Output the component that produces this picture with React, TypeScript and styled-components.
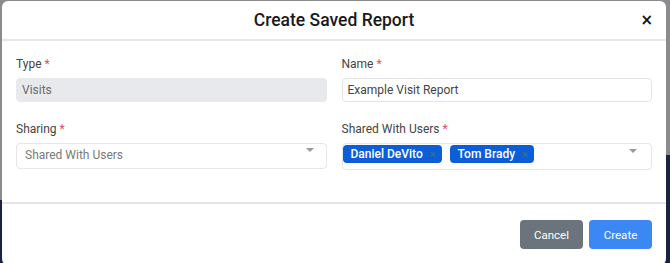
import styled, { createGlobalStyle } from "styled-components";

const GlobalStyle = createGlobalStyle`
  html, body {
    margin: 0;
    height: 263px;
    overflow: hidden;
  }
  body {
    font-family: Roboto, "Liberation Sans", Arial, sans-serif;
  }
`;

type Field = {
  label: string;
  kind: "readonly" | "text" | "select" | "chips";
  value?: string;
  chips?: string[];
};

const fields: Field[] = [
  { label: "Type", kind: "readonly", value: "Visits" },
  { label: "Name", kind: "text", value: "Example Visit Report" },
  { label: "Sharing", kind: "select", value: "Shared With Users" },
  { label: "Shared With Users", kind: "chips", chips: ["Daniel DeVito", "Tom Brady"] },
];

export default function App() {
  return (
    <>
      <GlobalStyle />
      <StyledBackdrop>
        <StyledModal>
          <StyledHeader>
            <StyledTitle>Create Saved Report</StyledTitle>
            <StyledClose aria-label="Close">×</StyledClose>
          </StyledHeader>
          <StyledBody>
            {fields.map((field) => (
              <StyledGroup key={field.label}>
                <StyledLabel>
                  {field.label} <StyledRequired>*</StyledRequired>
                </StyledLabel>
                {field.kind === "readonly" && (
                  <StyledInput $readOnly>{field.value}</StyledInput>
                )}
                {field.kind === "text" && <StyledInput>{field.value}</StyledInput>}
                {field.kind === "select" && (
                  <StyledSelect>
                    <StyledPlaceholder>{field.value}</StyledPlaceholder>
                    <StyledCaret />
                  </StyledSelect>
                )}
                {field.kind === "chips" && (
                  <StyledSelect $multi>
                    <StyledChipList>
                      {field.chips?.map((chip) => (
                        <StyledChip key={chip}>
                          {chip}
                          <StyledChipRemove>×</StyledChipRemove>
                        </StyledChip>
                      ))}
                    </StyledChipList>
                    <StyledCaret />
                  </StyledSelect>
                )}
              </StyledGroup>
            ))}
          </StyledBody>
          <StyledFooter>
            <StyledButton $variant="secondary">Cancel</StyledButton>
            <StyledButton $variant="primary">Create</StyledButton>
          </StyledFooter>
        </StyledModal>
      </StyledBackdrop>
    </>
  );
}

const StyledBackdrop = styled.div`
  height: 263px;
  box-sizing: border-box;
  padding: 1px 0 0 2px;
  background:
    linear-gradient(to bottom, #8b8b8d 200px, #1b2142 200px) left / 50% 100% no-repeat,
    linear-gradient(to bottom, #8b8b8d 155px, #1b2142 155px) right / 50% 100% no-repeat;
`;

const StyledModal = styled.div`
  width: 664px;
  background: #ffffff;
  border-radius: 6px;
  display: flex;
  flex-direction: column;
`;

const StyledHeader = styled.div`
  position: relative;
  height: 38px;
  display: flex;
  align-items: center;
  justify-content: center;
  border-bottom: 2px solid #e6e6e8;
`;

const StyledTitle = styled.h2`
  margin: 0;
  font-size: 17.5px;
  font-weight: 500;
  color: #1a1a1a;
`;

const StyledClose = styled.button`
  position: absolute;
  right: 13px;
  top: 9px;
  border: none;
  background: none;
  padding: 0;
  font-family: "DejaVu Sans", sans-serif;
  font-size: 15px;
  font-weight: 700;
  line-height: 20px;
  color: #111;
`;

const StyledBody = styled.div`
  display: grid;
  grid-template-columns: 1fr 1fr;
  column-gap: 15px;
  row-gap: 19px;
  padding: 15px 14px 32px;
`;

const StyledGroup = styled.div`
  display: flex;
  flex-direction: column;
  gap: 6px;
`;

const StyledLabel = styled.label`
  font-size: 12px;
  line-height: 16px;
  color: #444;
`;

const StyledRequired = styled.span`
  color: #e8466f;
`;

const StyledInput = styled.div<{ $readOnly?: boolean }>`
  height: 24px;
  box-sizing: border-box;
  padding: 0 5px;
  display: flex;
  align-items: center;
  font-size: 12px;
  color: ${({ $readOnly }) => ($readOnly ? "#6b6b6b" : "#444")};
  background: ${({ $readOnly }) => ($readOnly ? "#e8e9ec" : "#ffffff")};
  border: 1px solid ${({ $readOnly }) => ($readOnly ? "#e8e9ec" : "#e4e4e6")};
  border-radius: 4px;
`;

const StyledSelect = styled.div<{ $multi?: boolean }>`
  height: ${({ $multi }) => ($multi ? "27px" : "26px")};
  box-sizing: border-box;
  padding: ${({ $multi }) => ($multi ? "1px 14px 0 0" : "0 12px 0 8px")};
  display: flex;
  align-items: ${({ $multi }) => ($multi ? "flex-start" : "center")};
  justify-content: space-between;
  border: 1px solid #e6e6e8;
  border-radius: 4px;
`;

const StyledPlaceholder = styled.span`
  font-size: 12px;
  color: #7a7a7a;
  margin-top: -3px;
`;

const StyledCaret = styled.span`
  align-self: flex-start;
  margin-top: 4px;
  width: 0;
  height: 0;
  border-left: 4px solid transparent;
  border-right: 4px solid transparent;
  border-top: 4px solid #9a9a9a;
`;

const StyledChipList = styled.div`
  display: flex;
  gap: 8px;
`;

const StyledChip = styled.span`
  height: 18px;
  padding: 0 6px 0 8px;
  display: flex;
  align-items: center;
  gap: 7px;
  background: #0b5ed7;
  color: #ffffff;
  font-size: 12px;
  font-weight: 500;
  border-radius: 4px;
`;

const StyledChipRemove = styled.span`
  font-size: 11px;
  color: #3f7a5e;
  opacity: 0.8;
`;

const StyledFooter = styled.div`
  display: flex;
  justify-content: flex-end;
  gap: 6px;
  padding: 16px 14px;
  border-top: 2px solid #e6e6e8;
`;

const StyledButton = styled.button<{ $variant: "primary" | "secondary" }>`
  width: 63px;
  height: 29px;
  border: none;
  border-radius: 4px;
  font-family: Roboto, "Liberation Sans", Arial, sans-serif;
  font-size: 11.5px;
  color: #ffffff;
  background: ${({ $variant }) => ($variant === "primary" ? "#3b87f4" : "#6b737d")};
`;
